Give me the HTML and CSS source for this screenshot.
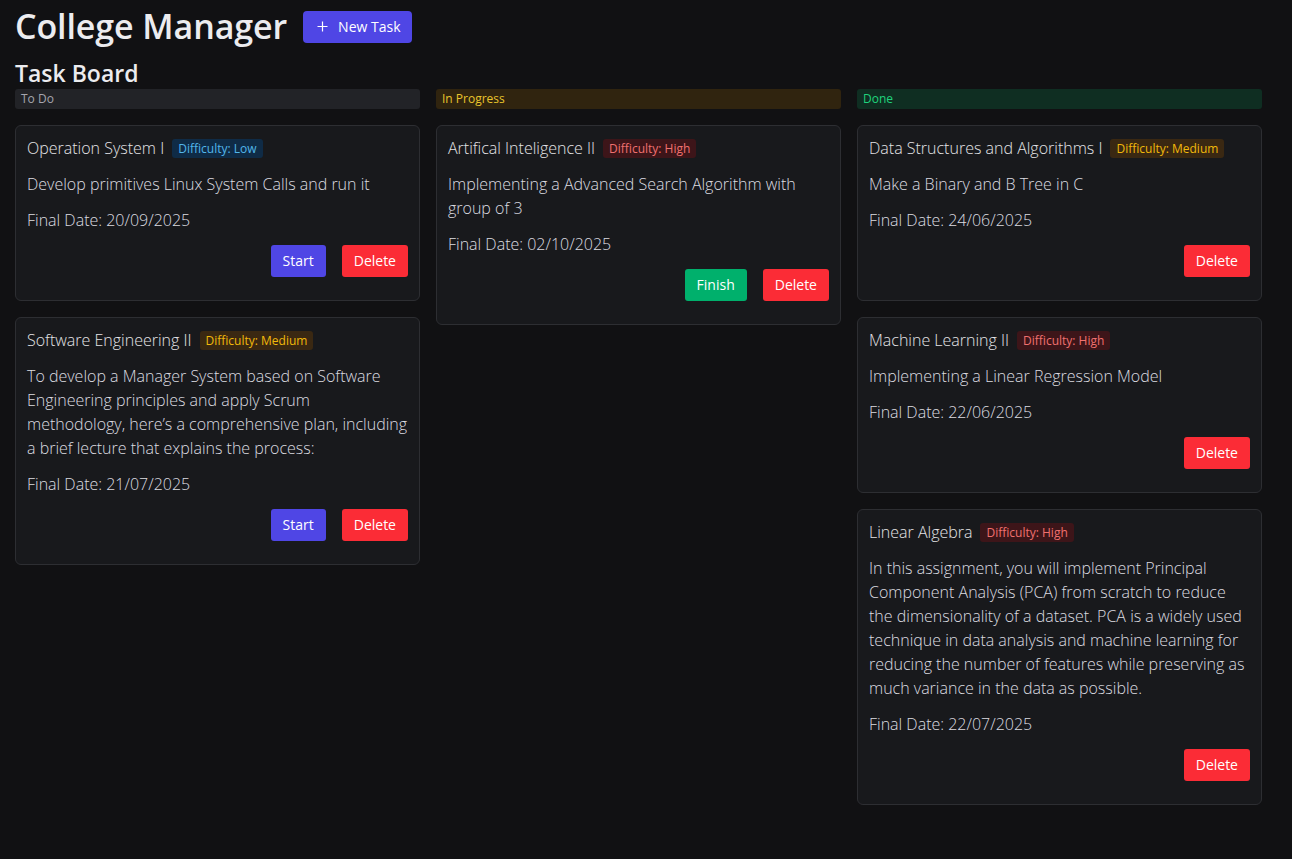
FILE: index.html
```html
<!DOCTYPE html>
<html lang="en">
<head>
<meta charset="utf-8">
<title>College Manager</title>
<link rel="stylesheet" href="styles.css">
</head>
<body>
<div class="page">
  <header class="top">
    <h1 class="brand">College Manager</h1>
    <button class="btn-new" type="button">
      <svg class="plus" width="11" height="11" viewBox="0 0 11 11" aria-hidden="true"><path d="M5.5 0.5v10M0.5 5.5h10" stroke="#fff" stroke-width="1.2" fill="none"/></svg>
      <span>New Task</span>
    </button>
  </header>
  <h2 class="board-title">Task Board</h2>
  <main class="board">
    <section class="column">
      <div class="col-head todo">To Do</div>
      <article class="card">
        <div class="card-head"><span class="card-title">Operation System I</span><span class="badge low">Difficulty: Low</span></div>
        <p class="desc">Develop primitives Linux System Calls and run it</p>
        <p class="date">Final Date: 20/09/2025</p>
        <div class="actions"><button class="btn start">Start</button><button class="btn del">Delete</button></div>
      </article>
      <article class="card">
        <div class="card-head"><span class="card-title">Software Engineering II</span><span class="badge medium">Difficulty: Medium</span></div>
        <p class="desc">To develop a Manager System based on Software Engineering principles and apply Scrum methodology, here’s a comprehensive plan, including a brief lecture that explains the process:</p>
        <p class="date">Final Date: 21/07/2025</p>
        <div class="actions"><button class="btn start">Start</button><button class="btn del">Delete</button></div>
      </article>
    </section>
    <section class="column">
      <div class="col-head progress">In Progress</div>
      <article class="card">
        <div class="card-head"><span class="card-title">Artifical Inteligence II</span><span class="badge high">Difficulty: High</span></div>
        <p class="desc">Implementing a Advanced Search Algorithm with group of 3</p>
        <p class="date">Final Date: 02/10/2025</p>
        <div class="actions"><button class="btn finish">Finish</button><button class="btn del">Delete</button></div>
      </article>
    </section>
    <section class="column">
      <div class="col-head done">Done</div>
      <article class="card">
        <div class="card-head"><span class="card-title">Data Structures and Algorithms I</span><span class="badge medium">Difficulty: Medium</span></div>
        <p class="desc">Make a Binary and B Tree in C</p>
        <p class="date">Final Date: 24/06/2025</p>
        <div class="actions"><button class="btn del">Delete</button></div>
      </article>
      <article class="card">
        <div class="card-head"><span class="card-title">Machine Learning II</span><span class="badge high">Difficulty: High</span></div>
        <p class="desc">Implementing a Linear Regression Model</p>
        <p class="date">Final Date: 22/06/2025</p>
        <div class="actions"><button class="btn del">Delete</button></div>
      </article>
      <article class="card">
        <div class="card-head"><span class="card-title">Linear Algebra</span><span class="badge high">Difficulty: High</span></div>
        <p class="desc">In this assignment, you will implement Principal Component Analysis (PCA) from scratch to reduce the dimensionality of a dataset. PCA is a widely used technique in data analysis and machine learning for reducing the number of features while preserving as much variance in the data as possible.</p>
        <p class="date">Final Date: 22/07/2025</p>
        <div class="actions"><button class="btn del">Delete</button></div>
      </article>
    </section>
  </main>
</div>
</body>
</html>
```
FILE: styles.css
```css
* { box-sizing: border-box; }
html, body { margin: 0; padding: 0; }
body {
  background: #111113;
  color: #e4e4e7;
  font-family: "Open Sans", "Noto Sans", sans-serif;
}
.page { padding: 0 15px; }

.top {
  display: flex;
  align-items: flex-start;
  height: 54px;
  gap: 16px;
}
.brand {
  margin: 6px 0 0;
  font-size: 34px;
  line-height: 40px;
  font-weight: 600;
  letter-spacing: -0.1px;
  color: #ececef;
}
.btn-new {
  margin-top: 11px;
  height: 32px;
  display: flex;
  align-items: center;
  gap: 10px;
  padding: 0 11px 1px 14px;
  border: 0;
  border-radius: 4px;
  background: #4f46e5;
  color: #fff;
  font-family: "Open Sans", sans-serif;
  font-size: 14px;
  font-weight: 400;
}
.plus { display: block; }

.board-title {
  margin: 5px 0 2px;
  font-size: 23px;
  line-height: 28px;
  font-weight: 600;
  color: #ececef;
}

.board {
  display: grid;
  grid-template-columns: repeat(3, 405px);
  column-gap: 16px;
  align-items: start;
}
.column {
  display: flex;
  flex-direction: column;
  gap: 16px;
}
.col-head {
  height: 20px;
  line-height: 20px;
  padding-left: 6px;
  border-radius: 3px;
  font-size: 12px;
}
.col-head.todo { background: #222327; color: #a5a5ad; }
.col-head.progress { background: #30240f; color: #e8c52c; }
.col-head.done { background: #0f2e22; color: #1fd37c; }

.card {
  background: #18191c;
  border: 1px solid #2d2e32;
  border-radius: 6px;
  padding: 12px 11px 23px;
}
.card-head {
  display: flex;
  align-items: center;
  gap: 8px;
  height: 20px;
}
.card-title {
  font-size: 16px;
  font-weight: 300;
  color: #e4e4e7;
}
.badge {
  font-size: 12px;
  line-height: 19px;
  height: 19px;
  padding: 0 6px;
  border-radius: 3px;
}
.badge.low { background: #0f2b46; color: #52b6ea; }
.badge.medium { background: #3a2812; color: #f1b80a; }
.badge.high { background: #3d1519; color: #f0706f; }

.desc, .date {
  margin: 12px 0 0;
  font-size: 16px;
  line-height: 24px;
  font-weight: 300;
  color: #dcdce0;
}
.desc { margin-top: 14px; }

.actions {
  margin-top: 13px;
  display: flex;
  justify-content: flex-end;
  gap: 16px;
}
.btn {
  height: 32px;
  padding: 0 12px 2px;
  border: 0;
  border-radius: 3px;
  color: #fff;
  font-family: "Open Sans", sans-serif;
  font-size: 14px;
  font-weight: 400;
}
.btn.start { background: #4f46e5; }
.btn.finish { background: #00b06c; }
.btn.del { background: #fb2c36; }
```
